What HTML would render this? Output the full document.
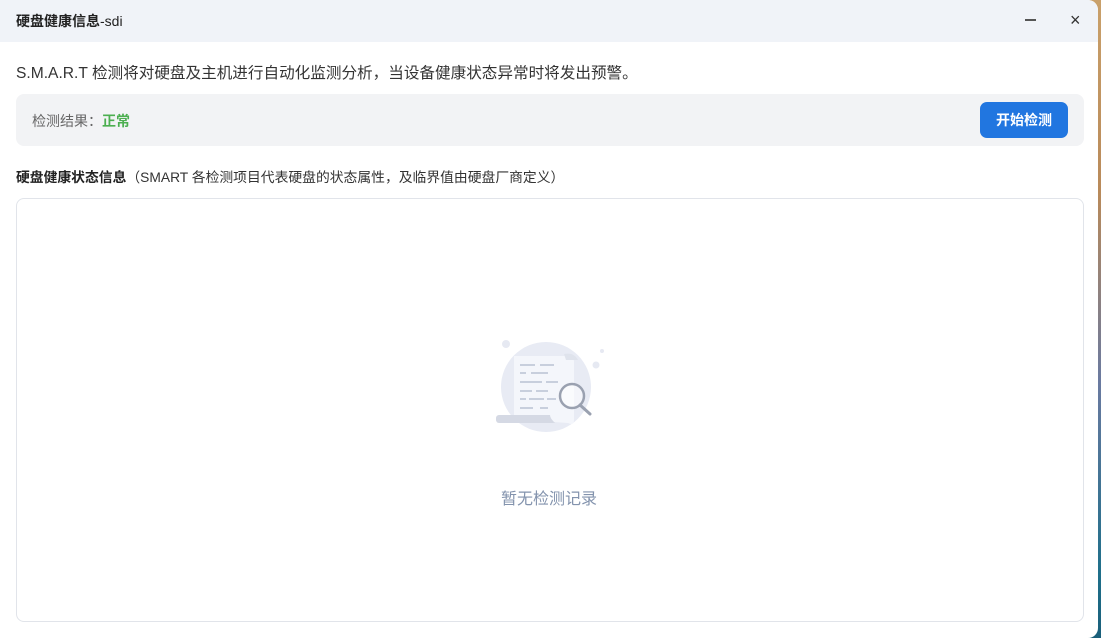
<!DOCTYPE html>
<html><head><meta charset="utf-8"><style>
*{margin:0;padding:0;box-sizing:border-box}
html,body{width:1101px;height:638px;overflow:hidden}
body{background:linear-gradient(180deg,#c9a06a 0%,#b98a5a 30%,#6a7aa0 60%,#1f6f8a 90%,#1a5f7a 100%);font-family:"Liberation Sans","Noto Sans CJK SC",sans-serif;position:relative}
.win{position:absolute;left:0;top:0;width:1098px;height:638px;background:#fff;border-radius:0 10px 10px 0;overflow:hidden}
.title{height:42px;background:#f0f3f8;display:flex;align-items:center;padding-left:16px;font-size:14px;font-weight:bold;color:#222}
.title span{font-weight:normal}
.min{position:absolute;left:1025px;top:19px;width:11px;height:2px;background:#555}
.x{position:absolute;left:1070px;top:10px;font-size:18px;color:#333}
.desc{position:absolute;left:16px;top:61px;font-size:15.6px;color:#333}
.bar{position:absolute;left:16px;top:94px;width:1068px;height:52px;background:#f2f3f5;border-radius:8px}
.bar .l{position:absolute;left:16px;top:17px;font-size:14px;color:#666}
.bar .l b{color:#4caf50}
.btn{position:absolute;left:964px;top:8px;width:88px;height:36px;background:#2176e0;border-radius:7px;color:#fff;font-weight:bold;font-size:14px;text-align:center;line-height:36px}
.h{position:absolute;left:16px;top:166px;font-size:13.8px;color:#333}
.h b{color:#222}
.box{position:absolute;left:16px;top:198px;width:1068px;height:424px;border:1px solid #e1e4ea;border-radius:8px}
.empty{position:absolute;left:0;width:100%;top:485px;text-align:center;font-size:16px;color:#8393ad}
</style></head><body>
<div class="win">
<div class="title">硬盘健康信息<span>-sdi</span></div>
<div class="min"></div><div class="x">×</div>
<div class="desc">S.M.A.R.T 检测将对硬盘及主机进行自动化监测分析，当设备健康状态异常时将发出预警。</div>
<div class="bar"><div class="l">检测结果：<b>正常</b></div><div class="btn">开始检测</div></div>
<div class="h"><b>硬盘健康状态信息</b>（SMART 各检测项目代表硬盘的状态属性，及临界值由硬盘厂商定义）</div>
<div class="box"></div>
<svg style="position:absolute;left:480px;top:330px" width="140" height="110" viewBox="0 0 140 110">
<circle cx="26" cy="14" r="4" fill="#e6e9f2"/><circle cx="116" cy="35" r="3.5" fill="#e6e9f2"/><circle cx="122" cy="21" r="2" fill="#e6e9f2"/>
<circle cx="66" cy="57" r="45" fill="#e8ebf4"/>
<rect x="16" y="85" width="60" height="8" rx="3" fill="#d5d9e4"/>
<path d="M34 26 H88 Q94 26 94 32 V90 Q94 96 88 93 L74 92 Q70 88 70 85 H34 Z" fill="#f4f6fb"/>
<path d="M84 24 Q94 22 98 30 H86 Z" fill="#dfe3ec"/>
<g stroke="#c8cfdd" stroke-width="2"><line x1="40" y1="35" x2="55" y2="35"/><line x1="60" y1="35" x2="74" y2="35"/><line x1="40" y1="43" x2="46" y2="43"/><line x1="51" y1="43" x2="68" y2="43"/><line x1="40" y1="52" x2="62" y2="52"/><line x1="66" y1="52" x2="78" y2="52"/><line x1="40" y1="61" x2="52" y2="61"/><line x1="56" y1="61" x2="68" y2="61"/><line x1="40" y1="69" x2="46" y2="69"/><line x1="49" y1="69" x2="64" y2="69"/><line x1="67" y1="69" x2="76" y2="69"/><line x1="40" y1="78" x2="53" y2="78"/><line x1="60" y1="78" x2="68" y2="78"/></g>
<circle cx="92" cy="66" r="12" fill="rgba(255,255,255,.5)" stroke="#9aa1b0" stroke-width="2.5"/>
<line x1="100" y1="75" x2="110" y2="84" stroke="#9aa1b0" stroke-width="3" stroke-linecap="round"/>
</svg>
<div class="empty">暂无检测记录</div>
</div>
</body></html>
